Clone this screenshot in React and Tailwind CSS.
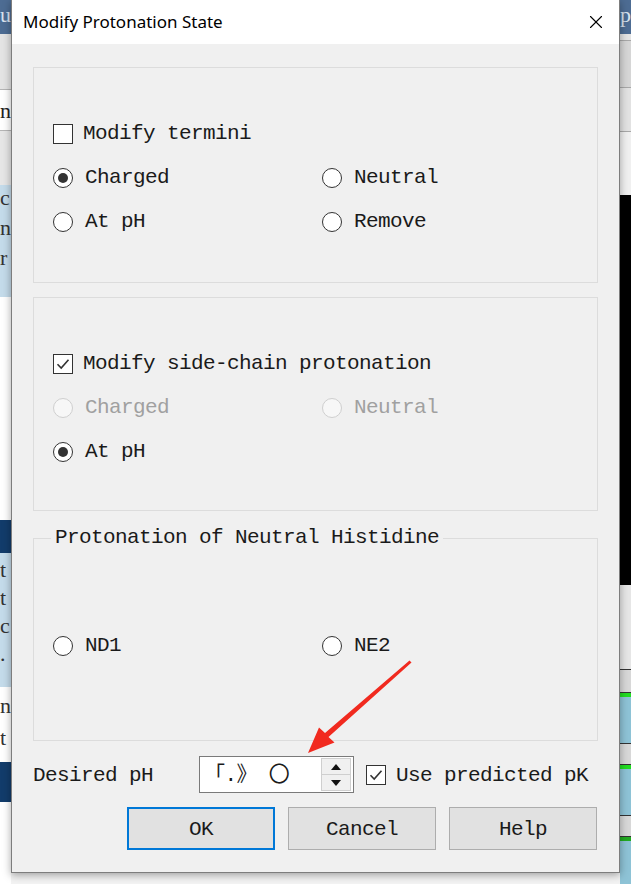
import { X } from 'lucide-react'

const mono = "font-['Liberation_Mono','Noto_Sans_CJK_SC',monospace] text-[21px] leading-[24px] tracking-[-0.6px]"

function CheckBox({ checked }) {
  return (
    <span className="flex h-[20px] w-[20px] shrink-0 items-center justify-center border border-[#333] bg-white">
      {checked && (
        <svg width="16" height="16" viewBox="0 0 16 16">
          <path d="M2.5 8.2 L6.2 12 L13.5 3.8" fill="none" stroke="#333" strokeWidth="1.6" />
        </svg>
      )}
    </span>
  )
}

function Radio({ checked, disabled }) {
  return (
    <span
      className={`flex h-[20px] w-[20px] shrink-0 items-center justify-center rounded-full border ${
        disabled ? 'border-[#cfcfcf] bg-[#f7f7f7]' : 'border-[#333] bg-white'
      }`}
    >
      {checked && <span className="h-[10px] w-[10px] rounded-full bg-[#333]" />}
    </span>
  )
}

function RadioItem({ label, checked, disabled }) {
  return (
    <div className="flex h-[24px] items-center gap-[12px]">
      <Radio checked={checked} disabled={disabled} />
      <span className={disabled ? 'text-[#a0a0a0]' : 'text-[#1a1a1a]'}>{label}</span>
    </div>
  )
}

function Button({ label, primary }) {
  return (
    <button
      type="button"
      className={`h-[43px] w-[148px] bg-[#e1e1e1] pt-[3px] text-[#1a1a1a] ${
        primary ? 'border-2 border-[#0078d7]' : 'border border-[#adadad]'
      }`}
    >
      {label}
    </button>
  )
}

function BackStrips() {
  return (
    <div className="flex h-[884px] w-[631px] justify-between bg-[#f3f3f3] font-['Liberation_Serif',serif] text-[22px] leading-none">
      <div className="flex w-[11px] flex-col overflow-hidden">
        <div className="h-[34px] bg-[#4d6c93] pt-[4px] text-[#d8e2ee]">u</div>
        <div className="h-[56px] border-b border-[#b5b5b5] bg-[#e4e4e4]" />
        <div className="h-[40px] bg-white pt-[10px] text-[#222]">n</div>
        <div className="h-[55px] border-t border-[#b5b5b5] bg-[#e6e6e6]" />
        <div className="flex h-[112px] flex-col gap-[8px] bg-[#c4dbea] pt-[2px] text-[#333]">
          <span>c</span>
          <span>n</span>
          <span>r</span>
        </div>
        <div className="h-[223px] bg-white" />
        <div className="h-[33px] bg-[#123c6b]" />
        <div className="flex h-[134px] flex-col gap-[6px] bg-[#c4dbea] pt-[6px] text-[#333]">
          <span>t</span>
          <span>t</span>
          <span>c</span>
          <span>.</span>
        </div>
        <div className="flex h-[75px] flex-col gap-[10px] bg-white pt-[8px] text-[#333]">
          <span>n</span>
          <span>t</span>
        </div>
        <div className="h-[40px] bg-[#123c6b]" />
        <div className="flex-1 bg-white" />
      </div>
      <div className="flex w-[11px] flex-col overflow-hidden">
        <div className="h-[34px] bg-[#4d6c93] pt-[4px] text-[#d8e2ee]">p</div>
        <div className="h-[6px] bg-[#e4e4e4]" />
        <div className="h-[48px] border-y border-[#a8a8a8] bg-[#d6d6d6]" />
        <div className="h-[44px] border-b border-[#a8a8a8] bg-[#e2e2e2]" />
        <div className="h-[63px] bg-[#f0f0f0]" />
        <div className="h-[390px] bg-black" />
        <div className="h-[84px] bg-[#e6e6e6]" />
        <div className="h-[24px] border-y border-[#333] bg-[#d8d8d8]" />
        <div className="h-[50px] border-t-4 border-[#22dd22] bg-[#8ec3d6]" />
        <div className="h-[22px] border-y border-[#333] bg-[#d8d8d8]" />
        <div className="h-[50px] border-t-4 border-[#22dd22] bg-[#8ec3d6]" />
        <div className="h-[22px] border-y border-[#333] bg-[#d8d8d8]" />
        <div className="flex-1 border-t-4 border-[#22aa22] bg-[#8ec3d6]" />
      </div>
    </div>
  )
}

function Arrow() {
  return (
    <svg className="pointer-events-none absolute left-0 top-0" width="631" height="884">
      <polygon
        points="411.5,662.5 409.5,660.5 325,733 319,727.5 308,753 334.5,742.5 328.5,737"
        fill="#f12a1f"
      />
    </svg>
  )
}

export default function App() {
  return (
    <div className="relative h-[884px] w-[631px] overflow-hidden">
      <BackStrips />

      <div className="absolute left-[11px] top-0 flex h-[873px] w-[609px] flex-col border border-t-0 border-[#7d7d7d] bg-[#f0f0f0] shadow-[0_2px_8px_rgba(0,0,0,0.35)]">
        {/* title bar */}
        <div className="flex h-[44px] items-center justify-between bg-white pl-[11px] pr-[12px]">
          <span className="font-['Noto_Sans',sans-serif] text-[17px] text-black">Modify Protonation State</span>
          <X size={22} strokeWidth={1.2} className="text-black" />
        </div>

        <div className={`flex flex-col px-[21px] pt-[23px] ${mono}`}>
          {/* termini */}
          <div className="flex h-[216px] flex-col gap-[20px] border border-[#dcdcdc] pl-[19px] pt-[54px]">
            <div className="flex h-[24px] items-center gap-[10px]">
              <CheckBox />
              <span className="text-[#1a1a1a]">Modify termini</span>
            </div>
            <div className="grid grid-cols-[269px_1fr]">
              <RadioItem label="Charged" checked />
              <RadioItem label="Neutral" />
            </div>
            <div className="grid grid-cols-[269px_1fr]">
              <RadioItem label="At pH" />
              <RadioItem label="Remove" />
            </div>
          </div>

          {/* side-chain */}
          <div className="mt-[14px] flex h-[214px] flex-col gap-[20px] border border-[#dcdcdc] pl-[19px] pt-[54px]">
            <div className="flex h-[24px] items-center gap-[10px]">
              <CheckBox checked />
              <span className="text-[#1a1a1a]">Modify side-chain protonation</span>
            </div>
            <div className="grid grid-cols-[269px_1fr]">
              <RadioItem label="Charged" disabled />
              <RadioItem label="Neutral" disabled />
            </div>
            <div className="grid grid-cols-[269px_1fr]">
              <RadioItem label="At pH" checked />
            </div>
          </div>

          {/* histidine */}
          <fieldset className="mt-[15px] h-[215px] border border-[#dcdcdc]">
            <legend className="ml-[17px] px-[4px] text-[#1a1a1a]">Protonation of Neutral Histidine</legend>
            <div className="grid grid-cols-[269px_1fr] pl-[19px] pt-[84px]">
              <RadioItem label="ND1" />
              <RadioItem label="NE2" />
            </div>
          </fieldset>

          {/* desired pH */}
          <div className="mt-[15px] flex h-[37px] items-center">
            <span className="w-[166px] pt-[3px] text-[#1a1a1a]">Desired pH</span>
            <div className="flex h-[37px] w-[155px] items-center border border-[#7a7a7a] bg-white pr-[2px]">
              <span className="flex-1 pl-[4px] pt-[2px] text-[#1a1a1a]">「.》 〇</span>
              <div className="flex h-[33px] w-[30px] flex-col">
                <div className="flex flex-1 items-center justify-center border border-[#cfcfcf] bg-[#f0f0f0]">
                  <svg width="10" height="6" viewBox="0 0 10 6"><polygon points="0,6 10,6 5,0" fill="#111" /></svg>
                </div>
                <div className="flex flex-1 items-center justify-center border border-t-0 border-[#cfcfcf] bg-[#f0f0f0]">
                  <svg width="10" height="6" viewBox="0 0 10 6"><polygon points="0,0 10,0 5,6" fill="#111" /></svg>
                </div>
              </div>
            </div>
            <div className="ml-[12px] flex items-center gap-[10px]">
              <CheckBox checked />
              <span className="pt-[3px] text-[#1a1a1a]">Use predicted pK</span>
            </div>
          </div>

          {/* buttons */}
          <div className="mt-[14px] flex justify-end gap-[13px] pr-[1px]">
            <Button label="OK" primary />
            <Button label="Cancel" />
            <Button label="Help" />
          </div>
        </div>
      </div>

      <Arrow />
    </div>
  )
}
